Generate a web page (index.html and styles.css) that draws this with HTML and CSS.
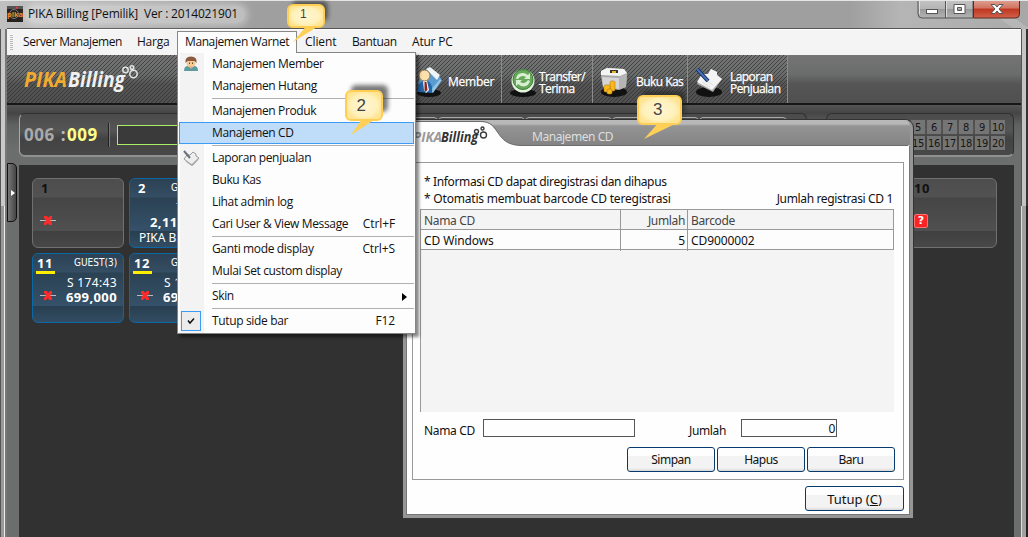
FILE: index.html
```html
<!DOCTYPE html>
<html lang="id">
<head>
<meta charset="utf-8">
<title>PIKA Billing</title>
<link rel="stylesheet" href="styles.css">
</head>
<body>
<div class="window">
  <header class="titlebar">
    <svg class="app-icon" width="16" height="16" viewBox="0 0 16 16"><rect width="16" height="16" fill="#28221f"/><path d="M0 0h16v3H0z" fill="#555"/><circle cx="7" cy="8" r="4.5" fill="none" stroke="#777"/><circle cx="10" cy="1.8" r="1.1" fill="#f33"/><text x="0" y="11" class="app-icon-text" textLength="16" lengthAdjust="spacingAndGlyphs">pika</text></svg>
    <span class="title">PIKA Billing [Pemilik]&nbsp; Ver : 2014021901</span>
    <svg class="controls" width="104" height="20" viewBox="0 0 104 20">
      <defs><linearGradient id="red" x1="0" y1="0" x2="0" y2="1"><stop offset="0" stop-color="#dfa194"/><stop offset=".45" stop-color="#d27460"/><stop offset=".5" stop-color="#bd3620"/><stop offset="1" stop-color="#d4614b"/></linearGradient>
      <linearGradient id="silver" x1="0" y1="0" x2="0" y2="1"><stop offset="0" stop-color="#c4c4c4"/><stop offset=".48" stop-color="#b5b5b5"/><stop offset=".5" stop-color="#999"/><stop offset="1" stop-color="#b4b4b4"/></linearGradient></defs>
      <path d="M1 0v14q0 4 4 4h51V0z" fill="url(#silver)" stroke="#555"/>
      <path d="M56.500 0v18h42q4 0 4-4V0z" fill="url(#red)" stroke="#5b2a24"/>
      <path d="M28.500 0v18" stroke="#555"/><path d="M29.500 0v17M2.500 0v14" stroke="#ddd"/>
      <rect x="9.500" y="9.500" width="11" height="4" fill="#fff" stroke="#555"/>
      <path d="M37 4.500h11v9H37zM40.500 7.500h4v3h-4z" fill="#fff" fill-rule="evenodd" stroke="#555"/>
      <path d="M74 4.500h4l2 2.500 2-2.500h4l-4 4.500 4 4.500h-4l-2-2.500-2 2.500h-4l4-4.500z" fill="#fff" stroke="#555"/>
    </svg>
  </header>

  <div class="client">
    <nav class="menubar">
      <i class="grip"></i>
      <span class="m-server">Server Manajemen</span><span class="m-harga">Harga</span><span class="m-open">Manajemen Warnet</span><span class="m-client">Client</span><span class="m-bantuan">Bantuan</span><span class="m-atur">Atur PC</span>
    </nav>

    <div class="toolbar">
      <div class="brand">
        <svg width="130" height="36" viewBox="0 0 130 36">
          <text x="4" y="24" class="logo gold" textLength="43" lengthAdjust="spacingAndGlyphs">PIKA</text>
          <text x="48" y="24" class="logo white" textLength="57" lengthAdjust="spacingAndGlyphs">Billing</text>
          <g fill="none" stroke="#e4e4e4" stroke-width="1.500"><circle cx="105.500" cy="7" r="2.700"/><circle cx="112" cy="4.500" r="1.800"/><circle cx="113.500" cy="11" r="3.700"/></g>
        </svg>
      </div>
      <div class="tools">
        <div class="tool t-member">
          <svg width="28" height="30" viewBox="0 0 28 30"><ellipse cx="14" cy="26" rx="12" ry="4" fill="#111"/><path d="M6 6l7-5 13 10-10 15L3 17z" fill="#5b9bd0"/><path d="M11 2l4-2 10 8-3 5z" fill="#edf5fa"/><path d="M15 24l10-12 2 1-9 13z" fill="#8fc5e8"/><path d="M3 25q-1-9 5-11h5q5 3 4 12z" fill="#2367a9"/><path d="M8 14h4l2 9-3 3-2-3z" fill="#fff"/><path d="M9.500 15h2l1 8-2 2-1-2z" fill="#8c2420"/><circle cx="9.500" cy="8.500" r="5.500" fill="#fbe0ad" stroke="#917345"/></svg>
          <span>Member</span></div>
        <div class="tool t-transfer">
          <svg width="28" height="30" viewBox="0 0 28 30"><ellipse cx="14" cy="26" rx="13" ry="4" fill="#111"/><circle cx="14" cy="14" r="11.500" fill="#e4f3dc"/><circle cx="14" cy="12.500" r="10" fill="#67a85b" stroke="#378034"/><path d="M7 12q1-7 8-6l4 2 2-2v6h-6l2-2q-5-3-8 2zm14 2q-2 7-9 5l-3-2-2 2v-6h6l-2 2q5 3 8-2z" fill="#d9efd1"/></svg>
          <span>Transfer/<br>Terima</span></div>
        <div class="tool t-kas">
          <svg width="30" height="30" viewBox="0 0 30 30"><ellipse cx="15" cy="25" rx="13" ry="5" fill="#111"/><path d="M2 4l6-3 17 1 3 4v3l-1 11-8 3L4 20 2 9z" fill="#a9a9a9"/><path d="M2 4l6-3 17 1 3 4-7 3L2 8z" fill="#f4f4f4"/><path d="M3 10l17 1v11L4 20z" fill="#d5d5d5"/><path d="M20 10l8-3-1 13-7 3z" fill="#b5b5b5"/><path d="M11 3h8v3h-8z" fill="#333"/><path d="M13 4h4v2h-4z" fill="#e7b72c"/><g fill="#f8b91e" stroke="#b87809" stroke-width=".6"><rect x="11" y="14" width="5" height="10" rx="1.500"/><rect x="5" y="18" width="6" height="7" rx="1.500"/><rect x="8" y="22" width="5" height="5" rx="1.500"/></g></svg>
          <span>Buku Kas</span></div>
        <div class="tool t-laporan">
          <svg width="30" height="30" viewBox="0 0 30 30"><ellipse cx="15" cy="25" rx="13" ry="5" fill="#111"/><path d="M3 17l5-10 6 0 3-5 6 3v3l5 4-9 13z" fill="#aaa"/><path d="M3 15l5-8 6 0 3-5 6 3v3l5 4-10 11z" fill="#f4f4f4"/><path d="M8 15l8 5M11 13l8 5" stroke="#ddd"/><path d="M3 2l11 12" stroke="#152b5e" stroke-width="4"/><path d="M3 2l11 12" stroke="#4273bd" stroke-width="2"/></svg>
          <span>Laporan<br>Penjualan</span></div>
      </div>
    </div>

    <section class="status">
      <div class="counter"><b class="gray">006</b><b class="colon">:</b><b class="yellow">009</b><i class="divider"></i><i class="field"></i>
        <div class="slots"><i></i><i></i><i></i><i></i><i></i></div>
      </div>
      <div class="numbers"><span class="n5">5</span><span>6</span><span>7</span><span>8</span><span>9</span><span>10</span><span class="n5">15</span><span>16</span><span>17</span><span>18</span><span>19</span><span>20</span></div>
    </section>

    <main class="workspace">
      <div class="sidetab"><i></i></div>
      <div class="cards">
        <article class="card off"><b class="num">1</b><svg class="x" width="18" height="11" viewBox="0 0 18 11"><path d="M1 5.500h16" stroke="#bbb"/><path d="M5 1h3l1 2 2-2h2v3l-2 1 2 3v2h-3L9 8l-2 2H5V8l2-3-2-2z" fill="#ff2a2a"/></svg></article>
        <article class="card on"><b class="num">2</b><span class="guest">GUEST(1)</span><span class="time two">7:21</span><b class="amount two">2,111,000</b><span class="name">PIKA Billing</span></article>
        <article class="card off ten"><b class="num">10</b><i class="q">?</i></article>
        <article class="card on used first"><b class="num">11</b><span class="guest">GUEST(3)</span><span class="time">S 174:43</span><b class="amount">699,000</b><svg class="x" width="18" height="11" viewBox="0 0 18 11"><path d="M1 5.500h16" stroke="#bbb"/><path d="M5 1h3l1 2 2-2h2v3l-2 1 2 3v2h-3L9 8l-2 2H5V8l2-3-2-2z" fill="#ff2a2a"/></svg></article>
        <article class="card on used"><b class="num">12</b><span class="guest">GUEST(3)</span><span class="time">S 174:43</span><b class="amount">699,000</b><svg class="x" width="18" height="11" viewBox="0 0 18 11"><path d="M1 5.500h16" stroke="#bbb"/><path d="M5 1h3l1 2 2-2h2v3l-2 1 2 3v2h-3L9 8l-2 2H5V8l2-3-2-2z" fill="#ff2a2a"/></svg></article>
      </div>
    </main>
  </div>

  <section class="dialog">
    <header class="dialog-head">
      <svg width="510" height="26" viewBox="0 0 510 26">
        <path d="M3 26V2H78C98 2 91 25 118 25.500H507V26z" fill="#fefefe"/><path d="M0 1.500H78C98 1.500 91 25 118 25.500H505" fill="none" stroke="#6c6c6c"/>
        <text x="10" y="22" class="logo small gray" textLength="29" lengthAdjust="spacingAndGlyphs">PIKA</text>
        <text x="38" y="22" class="logo small black" textLength="37" lengthAdjust="spacingAndGlyphs">Billing</text>
        <g fill="none" stroke="#3c3c3c" stroke-width="1.400"><circle cx="73.500" cy="11.500" r="2"/><circle cx="79.500" cy="8.500" r="1.500"/><circle cx="80.500" cy="15" r="3"/></g>
      </svg>
      <span class="dialog-title">Manajemen CD</span>
    </header>
    <div class="panel">
      <p class="note">* Informasi CD dapat diregistrasi dan dihapus</p>
      <div class="note-row"><p class="note second">* Otomatis membuat barcode CD teregistrasi</p><p class="total">Jumlah registrasi CD 1</p></div>
      <div class="table">
        <div class="row head"><span>Nama CD</span><span class="right">Jumlah</span><span>Barcode</span></div>
        <div class="row"><span>CD Windows</span><span class="right">5</span><span class="code">CD9000002</span></div>
      </div>
      <div class="form"><label>Nama CD</label><div class="input wide"></div><label class="qty">Jumlah</label><div class="input">0</div></div>
      <div class="buttons"><button>Simpan</button><button>Hapus</button><button>Baru</button></div>
    </div>
    <button class="close">Tutup (<u>C</u>)</button>
  </section>

  <div class="dropdown">
    <div class="item"><svg class="ico" width="18" height="18" viewBox="0 0 18 18"><path d="M2 16q0-5 4-5h6q4 0 4 5z" fill="#5c9c9f"/><circle cx="9" cy="8" r="4.500" fill="#f5c895"/><path d="M3.500 8q-1-6.500 5.500-6.500T14.500 8l-2-2h-7z" fill="#8b5a3e"/><path d="M7 11.500h4l-2 2.500z" fill="#e1b078"/><path d="M7.500 7.500v1.500m3-1.500v1.500" stroke="#553"/></svg><span>Manajemen Member</span></div>
    <div class="item"><span>Manajemen Hutang</span></div>
    <hr>
    <div class="item"><span>Manajemen Produk</span></div>
    <div class="item selected"><span>Manajemen CD</span></div>
    <hr>
    <div class="item"><svg class="ico" width="18" height="18" viewBox="0 0 18 18"><path d="M2 10l3-4 3 0 3-3 3 2 0 2 3 2-6 7h-2z" fill="#eee" stroke="#999"/><path d="M2 2l6 7" stroke="#697079" stroke-width="2"/><path d="M4 12l6 4 6-6" fill="none" stroke="#aaa" stroke-width="1.500"/></svg><span>Laporan penjualan</span></div>
    <div class="item"><span>Buku Kas</span></div>
    <div class="item"><span>Lihat admin log</span></div>
    <div class="item"><span>Cari User &amp; View Message</span><kbd>Ctrl+F</kbd></div>
    <hr>
    <div class="item"><span>Ganti mode display</span><kbd>Ctrl+S</kbd></div>
    <div class="item"><span>Mulai Set custom display</span></div>
    <hr>
    <div class="item"><span>Skin</span><i class="arrow"></i></div>
    <hr>
    <div class="item"><i class="check"><svg width="8" height="8" viewBox="0 0 8 8"><path d="M1 3.500l2 2.500L7 1.500" fill="none" stroke="#111" stroke-width="1.500"/></svg></i><span>Tutup side bar</span><kbd>F12</kbd></div>
  </div>

  <svg class="callouts" width="1028" height="160" viewBox="0 0 1028 160">
    <defs><radialGradient id="cream"><stop offset="0" stop-color="#fff6d2"/><stop offset=".75" stop-color="#fff1bb"/><stop offset="1" stop-color="#ffe594"/></radialGradient>
    <filter id="soft" x="-30%" y="-50%" width="160%" height="200%"><feGaussianBlur stdDeviation="2"/></filter></defs>
    <g fill="#222" opacity=".6" filter="url(#soft)"><rect x="292" y="1" width="36" height="20" rx="5"/><rect x="351" y="85" width="37" height="27" rx="5"/><rect x="642" y="91" width="43" height="25" rx="5"/></g>
    <g fill="#ffd057"><path d="M308 24l-15 18 24-15z"/><path d="M364 116l-13 19 23-15z"/><path d="M660 121l-16 18 33-16z"/></g>
    <g fill="url(#cream)" stroke="#ffcf55" stroke-width="2"><rect x="288" y="5" width="36" height="22" rx="5"/><rect x="346" y="91" width="36" height="29" rx="5"/><rect x="638" y="96" width="43" height="28" rx="5"/></g>
    <g class="callout-text"><text x="300" y="17.500" font-size="12">1</text><text x="356.500" y="111">2</text><text x="653" y="115">3</text></g>
  </svg>
</div>
</body>
</html>
```
FILE: styles.css
```css
* { box-sizing: border-box; }
body { margin: 0; width: 1028px; height: 537px; overflow: hidden; font: 12px/22px "Open Sans", "Noto Sans", sans-serif; color: #111; }
p { margin: 0; }
.window { position: relative; height: 537px; padding: 0 7px; background: linear-gradient(90deg, #555 0 1px, #c9c9c9 1px 5px, #777 5px 7px, transparent 7px 1020px, #555 1020px 1022px, #c4c4c4 1022px 1026px, #333 1026px) 0 29px / 100% 177px no-repeat, linear-gradient(90deg, #555 0 1px, #999 1px 4px, #eee 4px 5px, #777 5px 7px, transparent 7px 1020px, #555 1020px 1021px, #ddd 1021px 1022px, #a0a0a0 1022px 1026px, #222 1026px) 0 206px no-repeat, linear-gradient(35deg, transparent 75%, #b7b7b7 75% 82%, #a8a8a8 82%) 850px 0 / 178px 29px no-repeat, linear-gradient(90deg, #c0c0c0, #9f9f9f 260px, #9f9f9f 850px, #b5b5b5 900px, #aaa); }
.titlebar { height: 28px; display: flex; padding-top: 6px; }
.window::before { content: ""; position: absolute; inset: 0 0 auto; height: 1px; background: #e5e5e5; }
.app-icon-text { font: bold 7px "Open Sans"; fill: #f28b2c; }
.title { margin-left: 5px; line-height: 16px; letter-spacing: -.17px; height: 17px; padding-right: 7px; border-radius: 9px; background: #ffffff50; box-shadow: 0 0 6px 3px #ffffff50; white-space: nowrap; align-self: flex-start; }
.controls { margin: -6px 0 0 auto; }
.client { height: 509px; background: #6b6e6d; border-top: 1px solid #555; display: flex; flex-direction: column; }
.menubar { flex: none; height: 26px; background: #f4f4f4; border-top: 1px solid #fff; display: flex; align-items: flex-start; padding-top: 1px; line-height: 21px; white-space: nowrap; letter-spacing: -.4px; }
.grip { width: 3px; height: 15px; margin: 4px 0 0 3px; background: repeating-linear-gradient(#bbb 0 1px, transparent 1px 2px); }
.m-server { margin-left: 10px; width: 114px; }
.m-harga { width: 40px; letter-spacing: -.25px; }
.m-open { width: 120px; height: 24px; padding-left: 7px; border: 1px solid #888; border-bottom: 0; background: #fdfdfd; line-height: 19px; }
.m-client { width: 55px; padding-left: 8px; letter-spacing: -.1px; }
.m-bantuan { width: 60px; }
.m-bantuan { letter-spacing: -.4px; }
.m-atur { width: 60px; letter-spacing: -.2px; }
.toolbar { flex: none; height: 50px; border-bottom: 2px solid #171717; display: flex; background: linear-gradient(90deg, transparent 781px, #686868 781px) , linear-gradient(#747474, #505050); background: linear-gradient(#747474, #6b6d6c 40%, #555 60%, #505050); position: relative; }
.brand { width: 408px; padding: 8px 0 0 13px; }
.brand, .tool { background: linear-gradient(135deg, transparent 40%, #2c2c2cb0 40% 60%, transparent 60%) 0 0 / 4px 4px; }
.logo { font: italic bold 21px "Open Sans", sans-serif; }
.logo.small { font-size: 15px; }
.gold { fill: #f2ab2e; } .white { fill: #f1f1f1; } .gray { fill: #999; color: #aaa; } .black { fill: #333; }
.tools { display: flex; }
.tool { height: 48px; display: flex; align-items: flex-start; border-right: 1px solid #8b8b8b; color: #fff; font-size: 12px; line-height: 12px; -webkit-text-stroke: .25px #fff; white-space: nowrap; padding-top: 12px; letter-spacing: -.25px; }
.tool svg { flex: none; }
.t-member { width: 87px; } .t-member span { margin: 9px 0 0 5px; }
.t-transfer { width: 91px; padding-left: 7px; letter-spacing: -.6px; } .t-transfer span { margin: 4px 0 0 2px; }
.t-kas { width: 95px; padding-left: 6px; letter-spacing: -.55px; } .t-kas span { margin: 9px 0 0 7px; }
.t-laporan { width: 100px; padding-left: 6px; letter-spacing: -.55px; } .t-laporan span { margin: 4px 0 0 6px; }
.status { flex: none; height: 60px; padding: 8px 7px 8px 12px; display: flex; justify-content: space-between; background: linear-gradient(#555, #454545 8px, #606161 20px, #6b6e6d 45px); }
.counter, .numbers { border: 1px solid #303030; border-bottom: 2px solid #909090; border-left-color: #aaa; border-radius: 6px; background: linear-gradient(#4b4b4b, #555 40%, #434343 60%, #484848); }
.counter { width: 788px; display: flex; align-items: center; padding-left: 4px; }
.counter b { font: bold 17px "Noto Sans", sans-serif; letter-spacing: .5px; }
.counter .colon { color: #bbb; margin-left: 6px; }
.counter .yellow { color: #ff8; margin-left: 1px; }
.divider { height: 24px; margin-left: 10px; border-left: 1px solid #222; border-right: 1px solid #777; }
.field { height: 20px; width: 200px; margin-left: 7px; border: 1px solid #ae6; background: #3a3a3a; }
.slots { align-self: flex-start; display: flex; margin-left: 34px; padding-top: 3px; width: 436px; }
.slots i { flex: 1; height: 35px; border: 1px solid #aaa; border-radius: 4px; }
.numbers { width: 188px; display: grid; grid-template-columns: repeat(10, 14px); grid-auto-rows: 14px; gap: 2px; padding: 6px 0 0 20px; border-left-color: #303030; font: 11px/15px "DejaVu Sans Condensed", "DejaVu Sans", sans-serif; font-stretch: condensed; letter-spacing: -.3px; }
.numbers span { background: #757575; text-align: center; color: #151515; }
.numbers .n5 { grid-column: 5; }
.workspace { flex: 1; min-height: 0; display: flex; padding-right: 7px; align-items: flex-start; }
.sidetab { width: 10px; height: 59px; margin-top: -2px; margin-right: 2px; border: 1px solid #111; border-radius: 0 5px 5px 0; background: linear-gradient(90deg, #777, #444); display: flex; align-items: center; }
.sidetab i { margin-left: 3px; border: 3px solid transparent; border-left: 4px solid #fff; border-right: 0; }
.cards { flex: 1; height: 372px; background: #313131; display: grid; grid-template-columns: repeat(10, 92px); grid-auto-rows: 70px; gap: 5px; padding: 13px; }
.card { position: relative; border: 1px solid #707070; border-radius: 6px; background: linear-gradient(#4d4d4d, #525252 18px, #454545 19px, #505050 52px, #404040 52px, #484848); }
.card.on { border-color: #0b68a6; color: #fff; background: linear-gradient(#2c4154, #354e63 18px, #2b4253 19px, #355169 52px, #283f50 52px, #334c62); }
.ten { grid-column: 10; } .first { grid-column: 1; }
.num { position: absolute; left: 8px; top: 2px; font: bold 13px/15px "Noto Sans", sans-serif; letter-spacing: .5px; }
.used .num { left: 3px; width: 19px; border-bottom: 3px solid #fe0; padding-left: 1px; }
.guest { position: absolute; left: 41px; top: 1px; font: 10px/16px "DejaVu Sans Condensed", "DejaVu Sans"; font-stretch: condensed; }
.time { position: absolute; right: 6px; top: 22px; font: 12px/14px "Noto Sans"; letter-spacing: .35px; }
.amount { position: absolute; right: 6px; top: 36px; font: bold 13px/14px "Noto Sans"; letter-spacing: .4px; }
.amount.two { right: auto; left: 20px; } .time.two { right: auto; left: 46px; }
.name { position: absolute; left: 9px; top: 51px; font: 12px/16px "Noto Sans"; }
.x { position: absolute; left: 6px; top: 36px; }
.q { position: absolute; left: 8px; top: 35px; width: 14px; height: 14px; border: 1px solid #ff7070; border-radius: 2px; background: #fa2424; color: #fff; font: bold 11px/12px "DejaVu Sans"; text-align: center; }
.dialog { position: absolute; left: 403px; top: 120px; width: 510px; height: 398px; border: 3px solid #969696; border-top: 0; border-radius: 8px 8px 0 0; background: #fefefe; overflow: hidden; box-shadow: inset 0 0 0 1px #777, 0 0 0 1px #333; font-family: "Noto Sans", sans-serif; letter-spacing: -.35px; }
.dialog-head { height: 26px; margin: 0 -3px; position: relative; background: linear-gradient(#b8b8b8 0 4px, #949494 6px, #838383); }
.dialog-head svg { display: block; }
.logo { letter-spacing: 0; }
.dialog-title { position: absolute; left: 129px; top: 6px; color: #dedede; letter-spacing: -.45px; }
.panel { margin: 16px 6px 0; height: 318px; border: 1px solid #999; padding: 10px 9px 0 7px; }
.note, .total { line-height: 17px; margin-left: 4px; white-space: nowrap; }
.second { letter-spacing: -.2px; }
.note-row { display: flex; justify-content: space-between; padding-right: 1px; }
.table { height: 203px; margin-top: 2px; border: 1px solid #999; border-width: 1px 0 0 1px; background: #f4f4f4; }
.row { display: grid; grid-template-columns: 199px 67px 1fr; height: 20px; line-height: 21px; border-right: 1px solid #999; border-bottom: 1px solid #999; background: #fdfdfd; }
.row span { padding: 0 3px; border-left: 1px solid #999; } .row span:first-child { border: 0; }
.row + .row { letter-spacing: -.1px; }
.head { background: #f4f4f4; color: #444; }
.row .right { text-align: right; padding-right: 2px; }
.form { display: flex; margin-top: 7px; padding-left: 4px; }
.form label { width: 59px; line-height: 24px; }
.input { width: 96px; height: 18px; border: 1px solid #555; text-align: right; padding-right: 1px; line-height: 18px; }
.input.wide { width: 152px; } .form .qty { margin-left: 54px; width: 52px; }
.buttons { display: flex; justify-content: flex-end; gap: 2px; margin: 4px -1px 0 0; }
button { width: 88px; height: 25px; padding: 0; border: 1px solid #083b6d; border-radius: 3px; background: linear-gradient(#fefefe 0 8px, #f3f3f3 8px 20px, #d8d8d8); font: 12px/24px "Noto Sans", sans-serif; letter-spacing: -.5px; color: #111; }
.close { display: block; width: 99px; margin: 6px 0 0 399px; font-size: 13px; letter-spacing: 0; }
.dropdown { position: absolute; left: 177px; top: 52px; width: 239px; height: 282px; border: 1px solid #858585; background: linear-gradient(90deg, #fdfdfd 0 2px, #f3f3f3 2px 26px, #fdfdfd 26px); box-shadow: 3px 3px 3px #0007; letter-spacing: -.35px; }
.dropdown::before { content: ""; position: absolute; left: 0; top: -1px; width: 118px; height: 1px; background: #fdfdfd; }
.item { height: 22px; display: flex; position: relative; padding-left: 34px; white-space: nowrap; }
.ico { position: absolute; left: 4px; top: 2px; }
.item kbd { position: absolute; right: 20px; font: inherit; letter-spacing: -.1px; }
.selected { margin: 0 1px; padding-left: 33px; background: #bfdcf8; box-shadow: inset 0 0 0 1px #3e9bf3; }
.dropdown hr { height: 1px; margin: 1px 1px 1px 34px; border: 0; background: #b0b0b0; }
.arrow { position: absolute; right: 8px; top: 8px; border: 4px solid transparent; border-left: 5px solid #000; border-right: 0; }
.check { position: absolute; left: 3px; top: 1px; width: 20px; height: 20px; border: 1px solid #3e9bf3; background: #ececec; display: grid; place-items: center; }
.callouts { position: absolute; left: 0; top: 0; pointer-events: none; }
.callout-text { font: 17px "Liberation Sans", sans-serif; fill: #444; }
```
